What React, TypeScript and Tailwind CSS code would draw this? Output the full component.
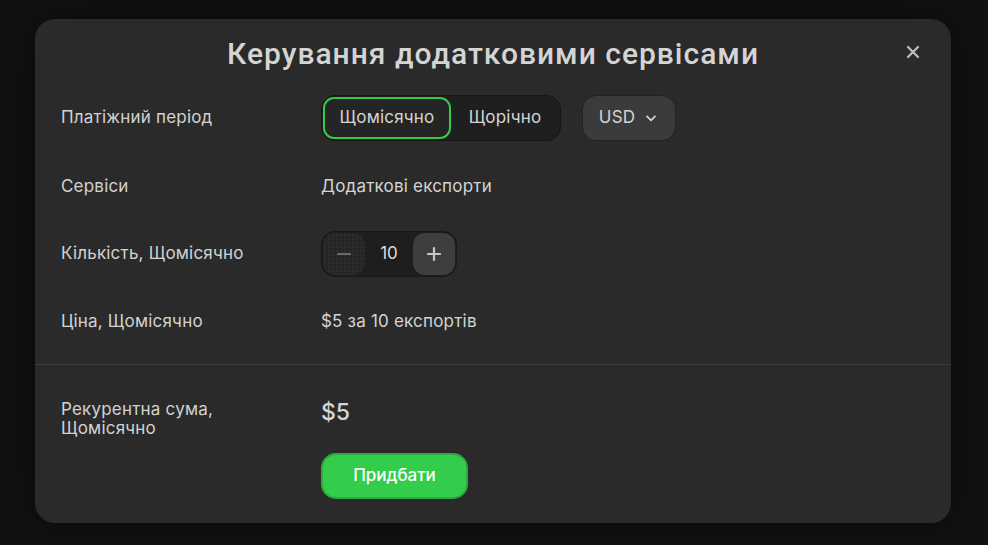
import React from "react";

function ChevronDown() {
  return (
    <svg width="16" height="16" viewBox="0 0 24 24" fill="none" stroke="currentColor" strokeWidth="2.6" strokeLinecap="round" strokeLinejoin="round">
      <path d="M6 9.5l6 6 6-6" />
    </svg>
  );
}

function Row({ label, children }: { label: string; children: React.ReactNode }) {
  return (
    <div className="flex h-[46px] items-center">
      <div className="w-[260px] text-[17px] tracking-[0.2px] text-[#d2d2d2]">{label}</div>
      <div className="flex items-center">{children}</div>
    </div>
  );
}

export default function App() {
  return (
    <div
      className="h-[545px] w-full overflow-hidden bg-[#121212] pl-[35px] pt-[19px]"
      style={{ fontFamily: "Inter, 'Noto Sans', sans-serif" }}
    >
      <div className="relative flex h-[504px] w-[916px] flex-col rounded-[20px] bg-[#2a2a2a] shadow-[0_0_40px_rgba(0,0,0,0.6)]">
        <div className="flex h-[66px] items-center justify-center pt-[2px]">
          <h1 className="text-[30px] font-medium tracking-[1px] text-[#d4d4d4]" style={{ fontFamily: "Roboto, sans-serif" }}>
            Керування додатковими сервісами
          </h1>
          <button className="absolute right-[29px] top-[24px] flex h-[18px] w-[18px] items-center justify-center text-[#bdbdbd]">
            <svg width="14" height="14" viewBox="0 0 14 14" stroke="currentColor" strokeWidth="2.2" strokeLinecap="round">
              <path d="M2 2l10 10M12 2L2 12" />
            </svg>
          </button>
        </div>

        <div className="flex flex-col px-[26px] pt-[10px]">
          <Row label="Платіжний період">
            <div className="flex h-[46px] items-center rounded-[14px] border border-[#161616] bg-[#1f1f1f] p-[1px]">
              <button className="flex h-[42px] w-[128px] items-center justify-center rounded-[11px] border-2 border-[#35c94a] bg-[#252525] text-[17px] tracking-[0.2px] text-[#d4d4d4]">
                Щомісячно
              </button>
              <button className="flex h-[42px] w-[108px] items-center justify-center text-[17px] tracking-[0.2px] text-[#d4d4d4]">
                Щорічно
              </button>
            </div>
            <button className="ml-[21px] flex h-[46px] w-[94px] items-center justify-center gap-[8px] rounded-[14px] border border-[#222] bg-[#3b3b3b] text-[17px] tracking-[0.2px] text-[#d4d4d4]">
              USD
              <ChevronDown />
            </button>
          </Row>

          <div className="mt-[23px]">
            <Row label="Сервіси">
              <span className="text-[17px] tracking-[0.2px] text-[#d4d4d4]">Додаткові експорти</span>
            </Row>
          </div>

          <div className="mt-[21px]">
            <Row label="Кількість, Щомісячно">
              <div className="flex h-[46px] w-[136px] items-center justify-between rounded-[14px] border border-[#181818] bg-[#1e1e1e] p-[1px]">
                <button
                  className="flex h-[42px] w-[42px] items-center justify-center rounded-[12px] bg-[#262626] text-[#6b6b6b]"
                  style={{
                    backgroundImage: "radial-gradient(rgba(255,255,255,0.08) 0.6px, transparent 0.8px)",
                    backgroundSize: "4px 4px",
                  }}
                >
                  <svg width="16" height="16" viewBox="0 0 16 16" stroke="currentColor" strokeWidth="2.2" strokeLinecap="round">
                    <path d="M2 8h12" />
                  </svg>
                </button>
                <span className="text-[17px] text-[#dcdcdc]">10</span>
                <button className="flex h-[42px] w-[42px] items-center justify-center rounded-[12px] bg-[#3e3e3e] text-[#c8c8c8]">
                  <svg width="16" height="16" viewBox="0 0 16 16" stroke="currentColor" strokeWidth="2.2" strokeLinecap="round">
                    <path d="M2 8h12M8 2v12" />
                  </svg>
                </button>
              </div>
            </Row>
          </div>

          <div className="mt-[22px]">
            <Row label="Ціна, Щомісячно">
              <span className="text-[17px] tracking-[0.2px] text-[#d4d4d4]">$5 за 10 експортів</span>
            </Row>
          </div>
        </div>

        <div className="mt-[19px] h-px w-full bg-[#3c3c3c]" />

        <div className="flex px-[26px] pt-[35px]">
          <div className="w-[260px] text-[17px] leading-[19px] tracking-[0.2px] text-[#d2d2d2]">
            Рекурентна сума,
            <br />
            Щомісячно
          </div>
          <div className="flex flex-col items-start">
            <div className="-mt-[2px] text-[23px] font-medium leading-[28px] text-[#d6d6d6]">$5</div>
            <button className="mt-[27px] flex h-[46px] w-[147px] items-center justify-center rounded-[15px] border-2 border-[#2ea83f] bg-[#34cc4b] text-[17px] font-medium text-white">
              Придбати
            </button>
          </div>
        </div>
      </div>
    </div>
  );
}
